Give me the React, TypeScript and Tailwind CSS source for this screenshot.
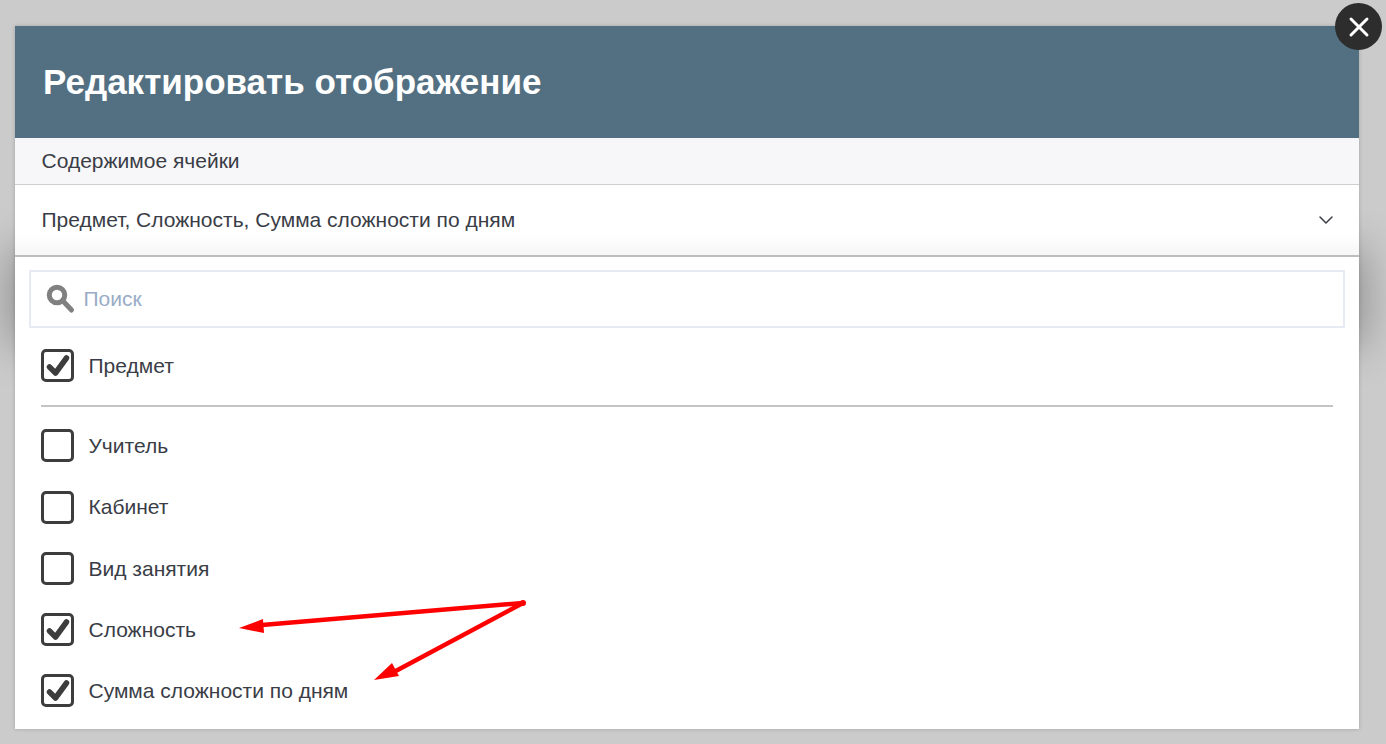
import { ChevronDown, X } from "lucide-react";

const font = "font-['Liberation_Sans',Arial,sans-serif]";

const options = [
  { label: "Учитель", checked: false },
  { label: "Кабинет", checked: false },
  { label: "Вид занятия", checked: false },
  { label: "Сложность", checked: true },
  { label: "Сумма сложности по дням", checked: true },
];

const Option = ({ label, checked }: { label: string; checked: boolean }) => (
  <div className="flex h-[61.25px] items-center gap-[14.5px]">
    <span className="h-[33px] w-[33px] rounded-[5px] border-[3px] border-[#3d3d3d] bg-white">
      {checked && (
        <svg width="27" height="27" viewBox="0 0 27 27" fill="none">
          <path d="M5.5 15 L11.5 21 L22.5 6" stroke="#3d3d3d" strokeWidth="5.5" strokeLinejoin="round" strokeLinecap="round" />
        </svg>
      )}
    </span>
    <span className="text-[21px] text-[#3a3d46]">{label}</span>
  </div>
);

export default function App() {
  return (
    <div className={`${font} relative h-[744px] w-[1386px] overflow-hidden bg-[#cbcbcb] pl-[15px] pt-[26px]`}>
      {/* soft shadow of the open dropdown, spills out behind the modal */}
      <div className="absolute left-[15px] top-[255px] h-[85px] w-[1344px] shadow-[0_0_44px_6px_rgba(0,0,0,0.3)]" />

      <div className="relative h-[703px] w-[1344px] bg-white shadow-[0_0_4px_rgba(0,0,0,0.2)]">
        <div className="flex h-[112px] items-center bg-[#537082] pl-[28px]">
          <h1 className="text-[35px] font-bold text-white">Редактировать отображение</h1>
        </div>
        <div className="flex h-[47px] items-center border-b border-[#cfcfd2] bg-[#f7f7f9] pl-[26.5px] text-[21px] text-[#3a3d46]">
          Содержимое ячейки
        </div>
        <div className="flex h-[70px] items-center justify-between bg-gradient-to-b from-white from-70% to-[#f6f6f6] pl-[26.5px] pr-[21px] text-[21px] text-[#3a3d46]">
          <span>Предмет, Сложность, Сумма сложности по дням</span>
          <ChevronDown size={24} strokeWidth={1.5} className="text-[#3a3d46]" />
        </div>
        <div className="h-[474px] border-t-2 border-[#bdbdbd] bg-white">
          <div className="px-[14px] pt-[13px]">
            <div className="flex h-[58px] items-center border-2 border-[#e6eaf2] pl-[15px]">
              <svg width="30" height="30" viewBox="0 0 30 30" fill="none">
                <circle cx="11" cy="11" r="7.75" stroke="#808080" strokeWidth="5" />
                <path d="M16.5 16.5 L25.5 26" stroke="#808080" strokeWidth="5" strokeLinecap="round" />
              </svg>
              <span className="ml-[7.5px] text-[21px] text-[#9aacc6]">Поиск</span>
            </div>
          </div>
          <div className="mt-[7px] px-[26px]">
            <Option label="Предмет" checked />
            <div className="mb-[8px] mt-[9px] h-[2px] bg-[#c4c4c4]" />
            {options.map((o) => (
              <Option key={o.label} label={o.label} checked={o.checked} />
            ))}
          </div>
        </div>
      </div>

      {/* close button over the modal corner */}
      <button className="absolute left-[1335px] top-[3px] flex h-[47px] w-[47px] items-center justify-center rounded-full bg-[#2d2d2d]">
        <X size={32} strokeWidth={2.2} className="text-white" />
      </button>

      {/* red annotation arrows */}
      <svg className="absolute left-0 top-0" width="1386" height="744" fill="none">
        <path d="M523 603 L262 625" stroke="#fe0000" strokeWidth="4.5" />
        <path d="M523 603 L392 673" stroke="#fe0000" strokeWidth="4.5" />
        <circle cx="523" cy="603" r="3" fill="#fe0000" />
        <path d="M239 628 L263 619 L264 633 Z" fill="#fe0000" />
        <path d="M374 680 L392 663 L399 676 Z" fill="#fe0000" />
      </svg>
    </div>
  );
}
